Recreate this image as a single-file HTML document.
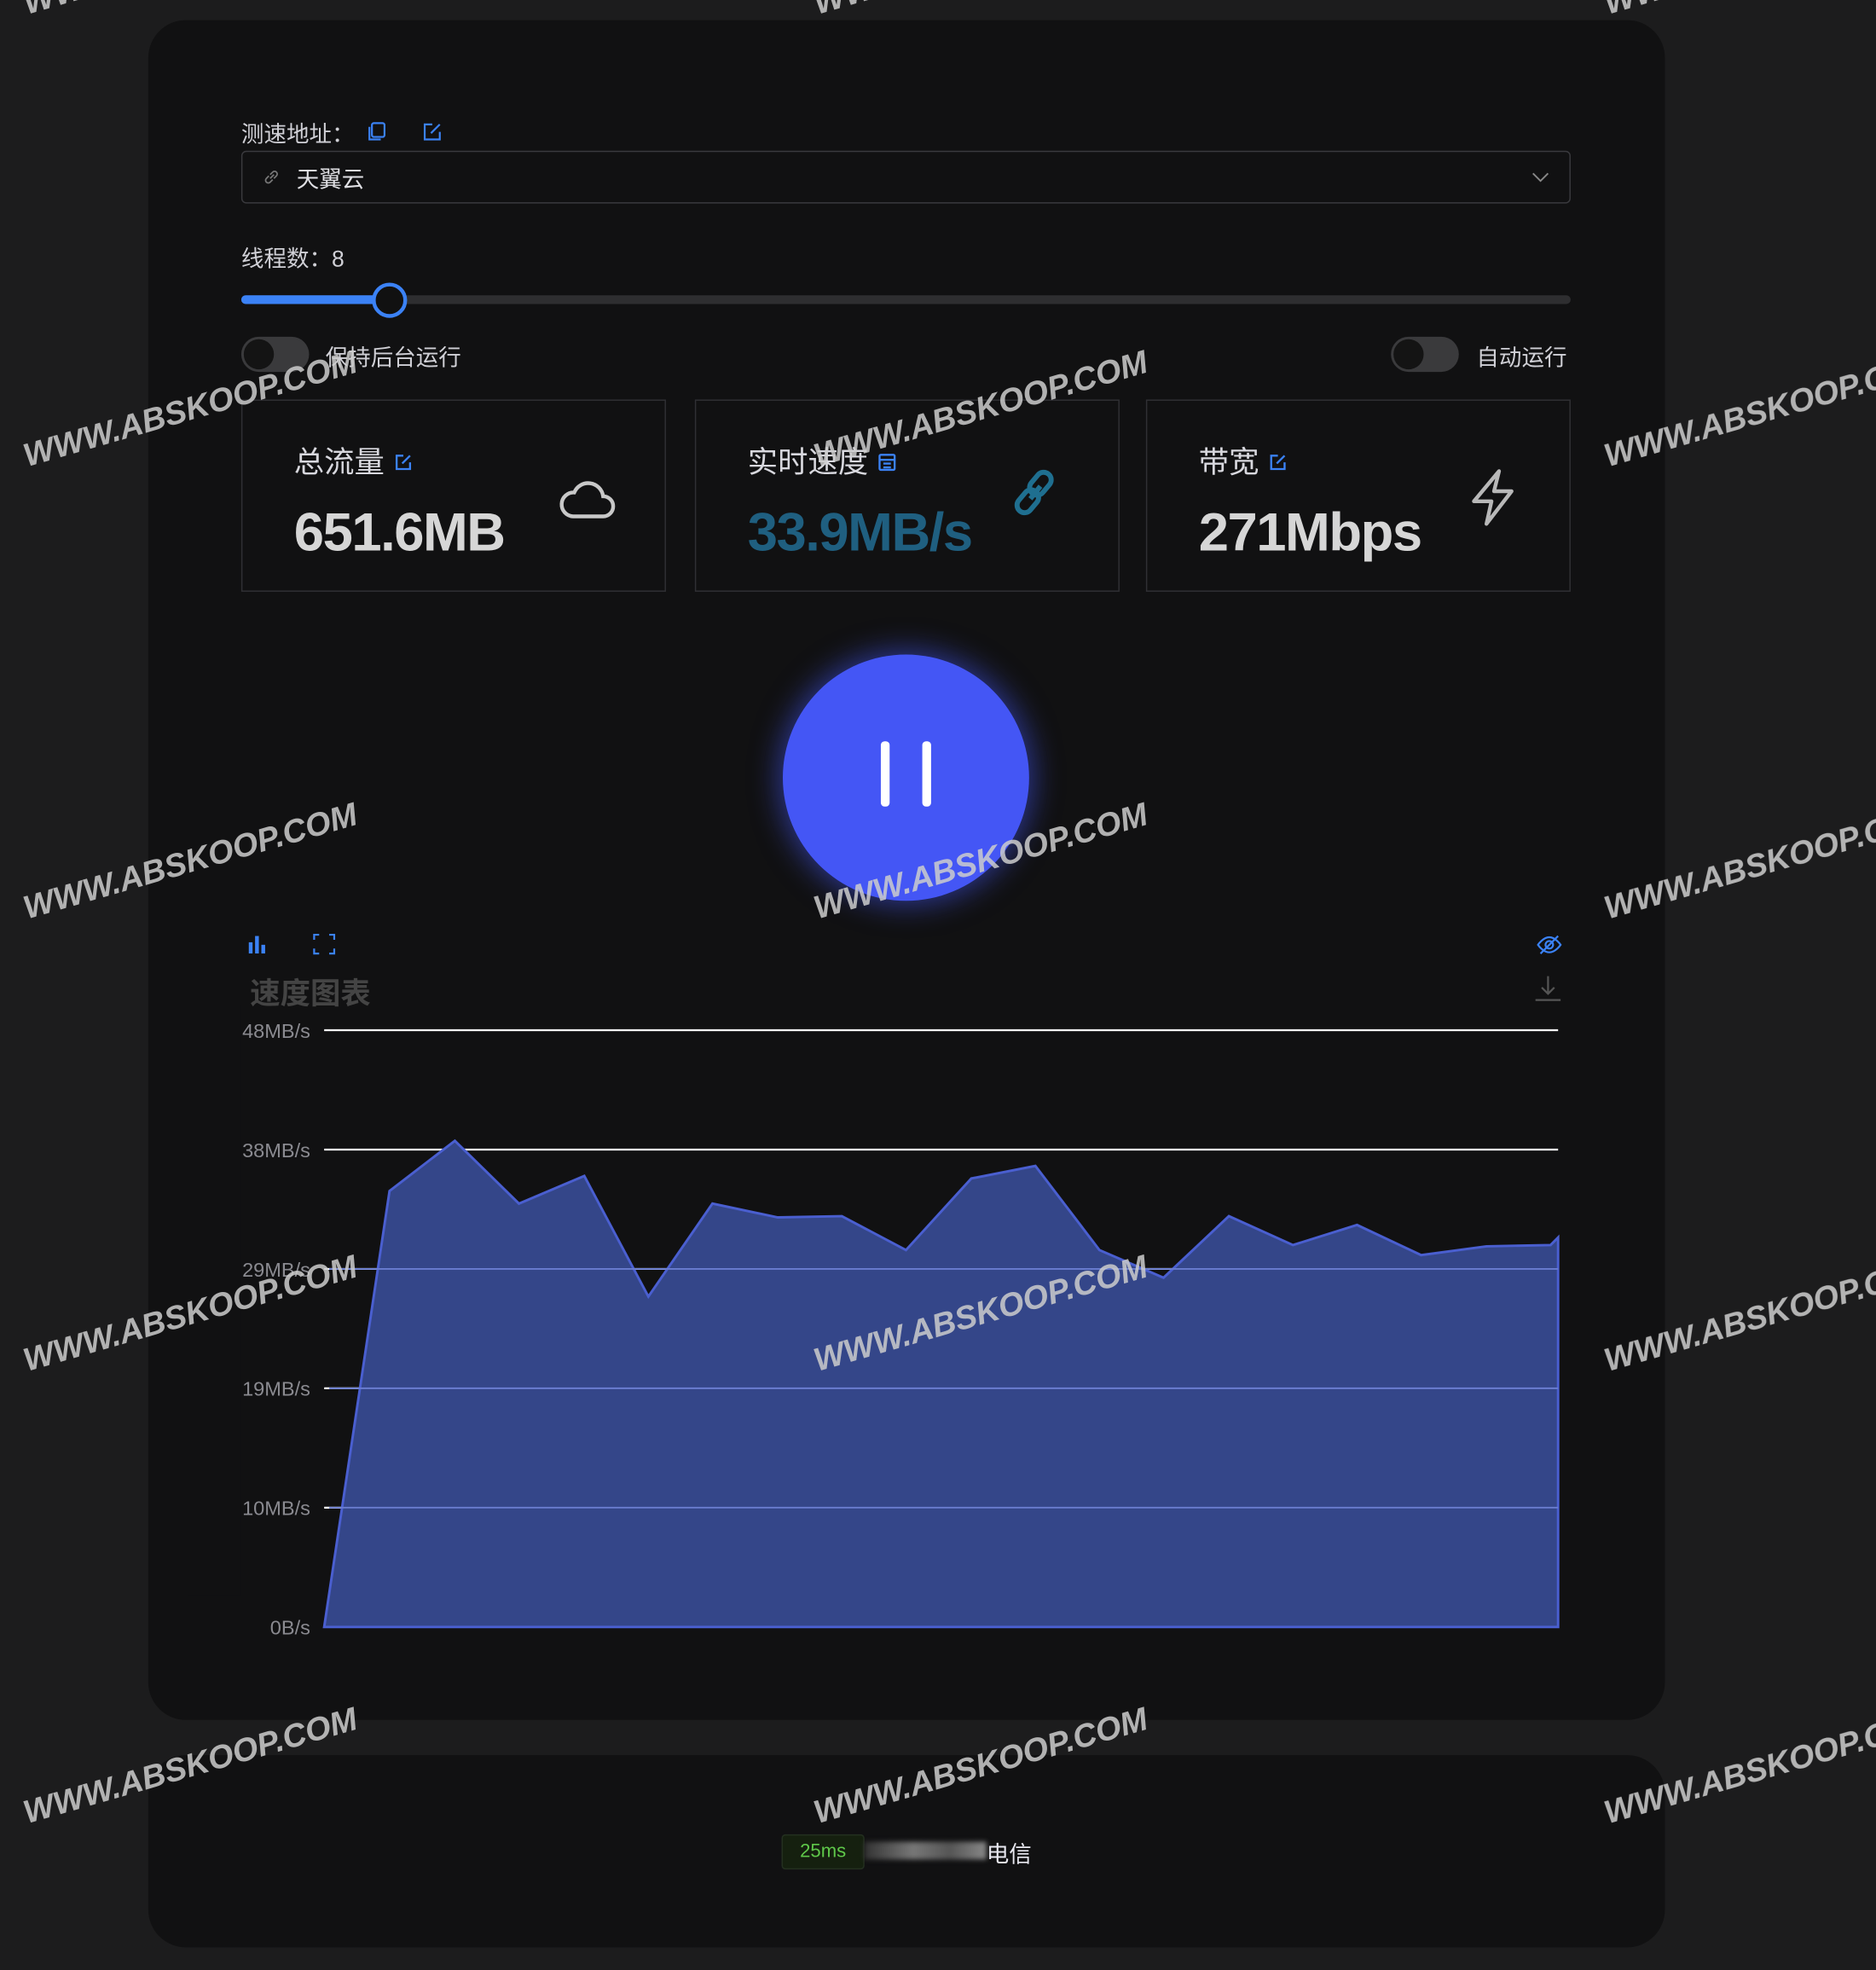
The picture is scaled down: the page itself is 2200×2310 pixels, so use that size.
<!DOCTYPE html>
<html><head><meta charset="utf-8"><style>
html,body{margin:0;padding:0;background:#1c1c1d;overflow:hidden;width:2200px;height:2310px}
#s{position:absolute;left:0;top:0;width:1493px;height:1568px;transform:scale(1.47354,1.4732);transform-origin:0 0;font-family:"Liberation Sans","Noto Sans CJK SC",sans-serif;color:#d0d0d6}
.card{position:absolute;left:118px;width:1207px;background:#111112;border-radius:30px}
.a{position:absolute}
.stat{position:absolute;top:318px;width:338px;height:153px;border:1px solid #303034;box-sizing:border-box}
.stat .t{position:absolute;left:41px;top:29px;font-size:24px;color:#d8d8de}
.stat .v{position:absolute;left:41px;top:81px;font-size:43px;font-weight:bold;color:#d6d6d6;letter-spacing:-1px}
.tog{position:absolute;width:54px;height:28px;border-radius:14px;background:#3a3a3c}
.tog:after{content:"";position:absolute;left:2px;top:2px;width:24px;height:24px;border-radius:50%;background:#141414}
.wm{position:absolute;font-size:26px;font-weight:bold;font-style:italic;color:rgba(205,205,205,0.85);transform:rotate(-16deg);white-space:nowrap;letter-spacing:0px}
</style></head><body><div id="s">
<div class="card" style="top:16px;height:1353px"></div>
<div class="card" style="top:1397px;height:153px"></div>

<div class="a" style="left:192px;top:93px;font-size:18px;color:#d0d0d6">测速地址：</div>
<svg class="a" style="left:291px;top:96px" width="18" height="18" viewBox="0 0 18 18" fill="none" stroke="#3b82f6" stroke-width="1.5"><rect x="5" y="2" width="10" height="11" rx="1.5"/><path d="M3 5v10h9"/></svg>
<svg class="a" style="left:335px;top:96px" width="18" height="18" viewBox="0 0 18 18" fill="none" stroke="#3b82f6" stroke-width="1.5"><path d="M9 3H3v12h12V9"/><path d="M8 10l7-7"/></svg>
<div class="a" style="left:192px;top:120px;width:1056px;height:40px;border:1px solid #3a3a3e;border-radius:4px"></div>
<svg class="a" style="left:208px;top:133px" width="16" height="16" viewBox="0 0 16 16" fill="none" stroke="#777" stroke-width="1.2"><path d="M7 9l3-3M6 7L4 9a2 2 0 003 3l2-2M10 9l2-2a2 2 0 00-3-3L7 6"/></svg>
<div class="a" style="left:236px;top:129px;font-size:18px;color:#e0e0e4">天翼云</div>
<svg class="a" style="left:1218px;top:136px" width="16" height="10" viewBox="0 0 16 10" fill="none" stroke="#888" stroke-width="1.3"><path d="M2 2l6 6 6-6"/></svg>

<div class="a" style="left:192px;top:192px;font-size:18px">线程数：8</div>
<div class="a" style="left:192px;top:235px;width:1058px;height:7px;border-radius:4px;background:#2e2e30"></div>
<div class="a" style="left:192px;top:235px;width:118px;height:7px;border-radius:4px;background:#3b82f6"></div>
<div class="a" style="left:296px;top:225px;width:22px;height:22px;border-radius:50%;border:3px solid #3b82f6;background:#111"></div>

<div class="tog" style="left:192px;top:268px"></div>
<div class="a" style="left:259px;top:271px;font-size:18px">保持后台运行</div>
<div class="tog" style="left:1107px;top:268px"></div>
<div class="a" style="left:1175px;top:271px;font-size:18px">自动运行</div>

<div class="stat" style="left:192px"><div class="t">总流量 <svg width="16" height="16" viewBox="0 0 18 18" fill="none" stroke="#3b82f6" stroke-width="1.8"><path d="M9 3H3v12h12V9"/><path d="M8 10l7-7"/></svg></div><div class="v">651.6MB</div>
<svg class="a" style="left:251px;top:56px" width="48" height="40" viewBox="0 0 48 40" fill="none" stroke="#c8c8c8" stroke-width="3"><path d="M12 36h24a8 8 0 000-16 12 12 0 00-23-3A9 9 0 0012 36z"/></svg></div>
<div class="stat" style="left:553px"><div class="t">实时速度 <svg width="16" height="16" viewBox="0 0 16 16" fill="none" stroke="#3b82f6" stroke-width="1.6"><rect x="2" y="2" width="12" height="12" rx="1"/><path d="M2 6h12M5 9h6M5 12h6"/></svg></div><div class="v" style="color:#1f5f80">33.9MB/s</div>
<svg class="a" style="left:248px;top:52px" width="42" height="42" viewBox="0 0 42 42" fill="none" stroke="#1f6f90" stroke-width="4"><path d="M18 26l8-10"/><rect x="20" y="4" width="12" height="20" rx="6" transform="rotate(40 26 14)"/><rect x="10" y="18" width="12" height="20" rx="6" transform="rotate(40 16 28)"/></svg></div>
<div class="stat" style="left:912px"><div class="t">带宽 <svg width="16" height="16" viewBox="0 0 18 18" fill="none" stroke="#3b82f6" stroke-width="1.8"><path d="M9 3H3v12h12V9"/><path d="M8 10l7-7"/></svg></div><div class="v">271Mbps</div>
<svg class="a" style="left:252px;top:52px" width="46" height="50" viewBox="0 0 46 50" fill="none" stroke="#b8b8b8" stroke-width="3" stroke-linejoin="round"><path d="M28 4L8 28h14l-4 18 20-26H24z"/></svg></div>

<div class="a" style="left:623px;top:521px;width:196px;height:196px;border-radius:50%;background:#4456f5;box-shadow:0 0 22px 4px rgba(70,90,255,0.5)"></div>
<div class="a" style="left:701px;top:590px;width:7px;height:52px;background:#fff;border-radius:3px"></div>
<div class="a" style="left:734px;top:590px;width:7px;height:52px;background:#fff;border-radius:3px"></div>

<svg class="a" style="left:197px;top:744px" width="16" height="15" viewBox="0 0 16 15" fill="#3b82f6"><rect x="1" y="6" width="3" height="9"/><rect x="6" y="1" width="3" height="14"/><rect x="11" y="8" width="3" height="7"/></svg>
<svg class="a" style="left:249px;top:743px" width="18" height="17" viewBox="0 0 18 17" fill="none" stroke="#3b82f6" stroke-width="1.5"><path d="M1 5V1h4M13 1h4v4M17 12v4h-4M5 16H1v-4"/></svg>
<svg class="a" style="left:1223px;top:743px" width="20" height="18" viewBox="0 0 20 18" fill="none" stroke="#3b82f6" stroke-width="1.5"><path d="M1 9s4-6 9-6 9 6 9 6-4 6-9 6-9-6-9-6z"/><circle cx="10" cy="9" r="3"/><path d="M3 16L17 2"/></svg>
<svg class="a" style="left:1221px;top:776px" width="22" height="22" viewBox="0 0 22 22" fill="none" stroke="#555" stroke-width="1.5"><path d="M11 1v14M6 10l5 5 5-5M1 20h20"/></svg>
<div class="a" style="left:199px;top:771px;font-size:24px;color:#444;font-weight:bold">速度图表</div>

<svg class="a" style="left:0;top:0" width="1493" height="1568" viewBox="0 0 1493 1568">
<g stroke="#ffffff" stroke-width="1.5"><line x1="258" y1="820" x2="1240" y2="820"/><line x1="258" y1="915" x2="1240" y2="915"/><line x1="258" y1="1010" x2="1240" y2="1010"/><line x1="258" y1="1105" x2="1240" y2="1105"/><line x1="258" y1="1200" x2="1240" y2="1200"/><line x1="258" y1="1295" x2="1240" y2="1295"/></g>
<path d="M258 1295L310 948L362 908L413 958L465 936L516 1032L567 958L619 969L670 968L721 995L773 938L824 928L875 995L926 1017L978 968L1029 991L1080 975L1131 999L1183 992L1234 991L1240 985L1240 1295Z" fill="#344689" stroke="#4a5fd0" stroke-width="2"/>
<g stroke="#6a7dd0" stroke-width="1.3"><line x1="262" y1="1010" x2="1240" y2="1010"/><line x1="262" y1="1105" x2="1240" y2="1105"/><line x1="262" y1="1200" x2="1240" y2="1200"/></g>
<g fill="#8a8a90" font-size="16" font-family="Liberation Sans,sans-serif" text-anchor="end"><text x="247" y="826">48MB/s</text><text x="247" y="921">38MB/s</text><text x="247" y="1016">29MB/s</text><text x="247" y="1111">19MB/s</text><text x="247" y="1206">10MB/s</text><text x="247" y="1301">0B/s</text></g>
<rect x="150" y="800" width="42" height="470" fill="#111112"/>
</svg>

<div class="a" style="left:622px;top:1460px;width:66px;height:28px;background:#15200f;border:1px solid #243020;border-radius:3px;box-sizing:border-box;color:#5fc84a;font-size:15px;text-align:center;line-height:26px">25ms</div>
<div class="a" style="left:688px;top:1466px;width:97px;height:14px;background:linear-gradient(90deg,#333,#777 40%,#555 70%,#888);filter:blur(2px)"></div>
<div class="a" style="left:785px;top:1462px;font-size:18px;color:#e8e8f0">电信</div>

<div class="wm" style="left:14px;top:310px">WWW.ABSKOOP.COM</div>
<div class="wm" style="left:643px;top:310px">WWW.ABSKOOP.COM</div>
<div class="wm" style="left:1272px;top:310px">WWW.ABSKOOP.COM</div>
<div class="wm" style="left:14px;top:670px">WWW.ABSKOOP.COM</div>
<div class="wm" style="left:643px;top:670px">WWW.ABSKOOP.COM</div>
<div class="wm" style="left:1272px;top:670px">WWW.ABSKOOP.COM</div>
<div class="wm" style="left:14px;top:1030px">WWW.ABSKOOP.COM</div>
<div class="wm" style="left:643px;top:1030px">WWW.ABSKOOP.COM</div>
<div class="wm" style="left:1272px;top:1030px">WWW.ABSKOOP.COM</div>
<div class="wm" style="left:14px;top:1390px">WWW.ABSKOOP.COM</div>
<div class="wm" style="left:643px;top:1390px">WWW.ABSKOOP.COM</div>
<div class="wm" style="left:1272px;top:1390px">WWW.ABSKOOP.COM</div>
<div class="wm" style="left:14px;top:-50px">WWW.ABSKOOP.COM</div>
<div class="wm" style="left:643px;top:-50px">WWW.ABSKOOP.COM</div>
<div class="wm" style="left:1272px;top:-50px">WWW.ABSKOOP.COM</div>
</div></body></html>
